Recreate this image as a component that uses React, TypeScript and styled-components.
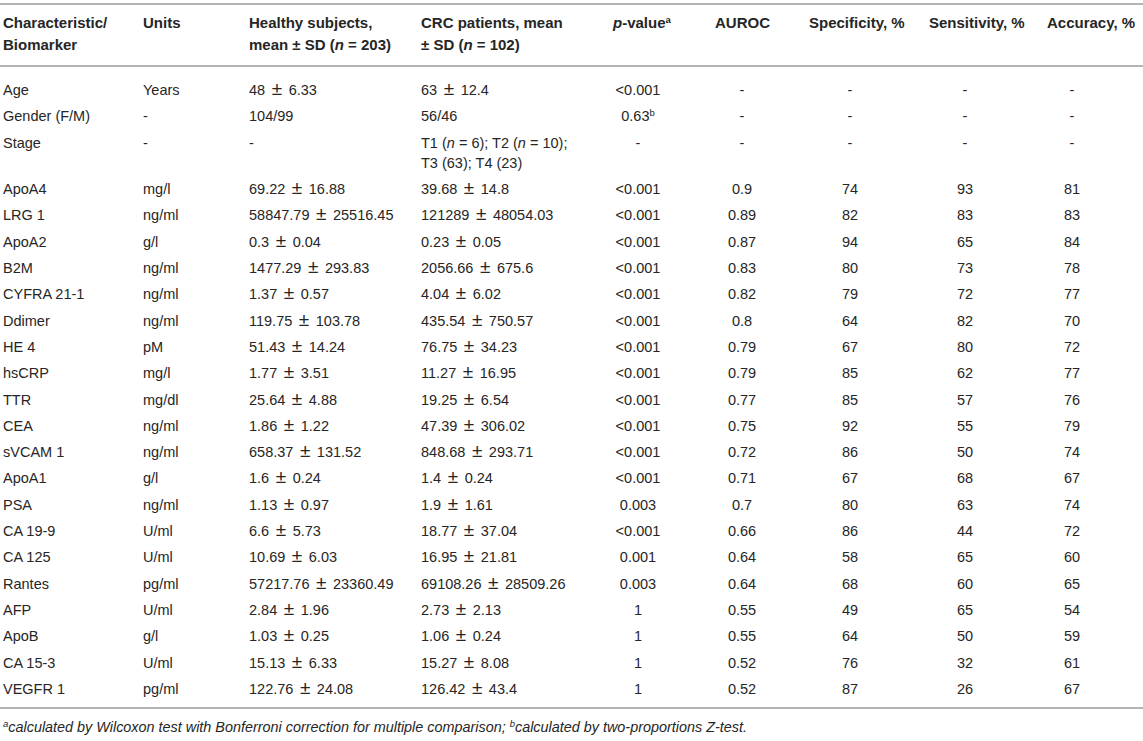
import { createGlobalStyle } from "styled-components";
import styled from "styled-components";

const GlobalStyle = createGlobalStyle`
  body {
    margin: 0;
    background: #fff;
    font-family: "Liberation Sans", Arial, sans-serif;
    color: #262626;
  }
`;

const COLUMNS = "140px 106px 172px 188px 100px 100px 120px 118px 99px";

const Wrapper = styled.div`
  width: 1143px;
  padding-top: 3px;
`;

const Head = styled.div`
  display: grid;
  grid-template-columns: ${COLUMNS};
  border-top: 2px solid #b4b4b4;
  border-bottom: 2px solid #b4b4b4;
  padding: 7px 0 9px;
`;

const HeadCell = styled.div<{ $pad?: number }>`
  font-size: 15px;
  font-weight: 700;
  line-height: 22px;
  padding-left: ${(p) => p.$pad ?? 3}px;
  white-space: nowrap;
`;

const Body = styled.div`
  padding: 10px 0 5px;
  border-bottom: 2px solid #b4b4b4;
`;

const Row = styled.div`
  display: grid;
  grid-template-columns: ${COLUMNS};
  padding: 3px 0;
  font-size: 14.5px;
  line-height: 20.3px;
`;

const Cell = styled.div<{ $center?: number }>`
  white-space: nowrap;
  ${(p) =>
    p.$center !== undefined
      ? `width: ${p.$center * 2}px; text-align: center;`
      : `padding-left: 3px;`}
`;

const Pm = styled.span`
  font-size: 19px;
  line-height: 0;
  margin: 0 2.5px;
`;

const Footnote = styled.p`
  margin: 9px 0 0 3px;
  font-size: 14.4px;
  font-style: italic;
  line-height: 18px;
`;

const Sup = styled.sup`
  font-size: 9.5px;
  line-height: 0;
  vertical-align: 5px;
  font-style: normal;
`;

const FootSup = styled(Sup)`
  font-style: italic;
`;

// centres of the numeric columns, measured from each column's left edge
const CENTERS = [32, 36, 44, 39, 28];

// the ± in the source is set wider than Arial's, so give it its own span
function withPm(v: React.ReactNode) {
  if (typeof v !== "string" || !v.includes(" ± ")) return v;
  const [a, b] = v.split(" ± ");
  return (
    <>
      {a} <Pm>±</Pm> {b}
    </>
  );
}

type Line = [string, string, string, React.ReactNode, React.ReactNode, string, string, string, string];

const rows: Line[] = [
  ["Age", "Years", "48 ± 6.33", "63 ± 12.4", "<0.001", "-", "-", "-", "-"],
  ["Gender (F/M)", "-", "104/99", "56/46", <>0.63<Sup>b</Sup></>, "-", "-", "-", "-"],
  [
    "Stage",
    "-",
    "-",
    <>
      T1 (<i>n</i> = 6); T2 (<i>n</i> = 10);
      <br />
      T3 (63); T4 (23)
    </>,
    "-",
    "-",
    "-",
    "-",
    "-",
  ],
  ["ApoA4", "mg/l", "69.22 ± 16.88", "39.68 ± 14.8", "<0.001", "0.9", "74", "93", "81"],
  ["LRG 1", "ng/ml", "58847.79 ± 25516.45", "121289 ± 48054.03", "<0.001", "0.89", "82", "83", "83"],
  ["ApoA2", "g/l", "0.3 ± 0.04", "0.23 ± 0.05", "<0.001", "0.87", "94", "65", "84"],
  ["B2M", "ng/ml", "1477.29 ± 293.83", "2056.66 ± 675.6", "<0.001", "0.83", "80", "73", "78"],
  ["CYFRA 21-1", "ng/ml", "1.37 ± 0.57", "4.04 ± 6.02", "<0.001", "0.82", "79", "72", "77"],
  ["Ddimer", "ng/ml", "119.75 ± 103.78", "435.54 ± 750.57", "<0.001", "0.8", "64", "82", "70"],
  ["HE 4", "pM", "51.43 ± 14.24", "76.75 ± 34.23", "<0.001", "0.79", "67", "80", "72"],
  ["hsCRP", "mg/l", "1.77 ± 3.51", "11.27 ± 16.95", "<0.001", "0.79", "85", "62", "77"],
  ["TTR", "mg/dl", "25.64 ± 4.88", "19.25 ± 6.54", "<0.001", "0.77", "85", "57", "76"],
  ["CEA", "ng/ml", "1.86 ± 1.22", "47.39 ± 306.02", "<0.001", "0.75", "92", "55", "79"],
  ["sVCAM 1", "ng/ml", "658.37 ± 131.52", "848.68 ± 293.71", "<0.001", "0.72", "86", "50", "74"],
  ["ApoA1", "g/l", "1.6 ± 0.24", "1.4 ± 0.24", "<0.001", "0.71", "67", "68", "67"],
  ["PSA", "ng/ml", "1.13 ± 0.97", "1.9 ± 1.61", "0.003", "0.7", "80", "63", "74"],
  ["CA 19-9", "U/ml", "6.6 ± 5.73", "18.77 ± 37.04", "<0.001", "0.66", "86", "44", "72"],
  ["CA 125", "U/ml", "10.69 ± 6.03", "16.95 ± 21.81", "0.001", "0.64", "58", "65", "60"],
  ["Rantes", "pg/ml", "57217.76 ± 23360.49", "69108.26 ± 28509.26", "0.003", "0.64", "68", "60", "65"],
  ["AFP", "U/ml", "2.84 ± 1.96", "2.73 ± 2.13", "1", "0.55", "49", "65", "54"],
  ["ApoB", "g/l", "1.03 ± 0.25", "1.06 ± 0.24", "1", "0.55", "64", "50", "59"],
  ["CA 15-3", "U/ml", "15.13 ± 6.33", "15.27 ± 8.08", "1", "0.52", "76", "32", "61"],
  ["VEGFR 1", "pg/ml", "122.76 ± 24.08", "126.42 ± 43.4", "1", "0.52", "87", "26", "67"],
];

function App() {
  return (
    <Wrapper>
      <GlobalStyle />
      <Head>
        <HeadCell>
          Characteristic/
          <br />
          Biomarker
        </HeadCell>
        <HeadCell>Units</HeadCell>
        <HeadCell>
          Healthy subjects,
          <br />
          mean ± SD (<i>n</i> = 203)
        </HeadCell>
        <HeadCell>
          CRC patients, mean
          <br />± SD (<i>n</i> = 102)
        </HeadCell>
        <HeadCell $pad={7}>
          <i>p</i>-value<Sup>a</Sup>
        </HeadCell>
        <HeadCell $pad={9}>AUROC</HeadCell>
        <HeadCell>Specificity, %</HeadCell>
        <HeadCell>Sensitivity, %</HeadCell>
        <HeadCell>Accuracy, %</HeadCell>
      </Head>
      <Body>
        {rows.map((r, i) => (
          <Row key={i}>
            {r.map((v, j) => (
              <Cell key={j} $center={j >= 4 ? CENTERS[j - 4] : undefined}>
                {withPm(v)}
              </Cell>
            ))}
          </Row>
        ))}
      </Body>
      <Footnote>
        <FootSup>a</FootSup>calculated by Wilcoxon test with Bonferroni correction for multiple comparison;{" "}
        <FootSup>b</FootSup>calculated by two-proportions Z-test.
      </Footnote>
    </Wrapper>
  );
}

export default App;
